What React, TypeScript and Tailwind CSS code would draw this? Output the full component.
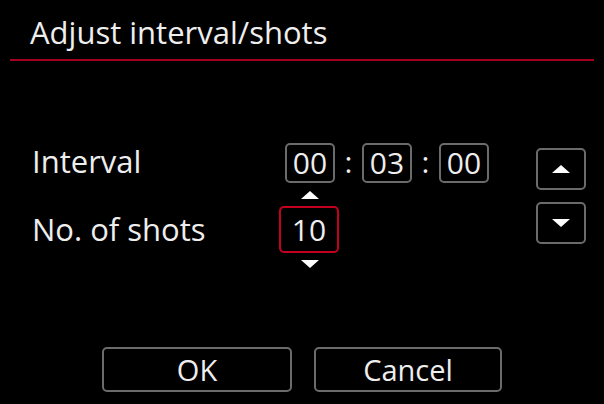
import React from "react";

function TimeBox({ value }: { value: string }) {
  return (
    <div className="w-[50px] h-[40px] border-2 border-[#6b6b6b] rounded-[5px] flex items-center justify-center text-[30px] leading-none text-[#eeeeee]">
      {value}
    </div>
  );
}

function Colon() {
  return <div className="w-[27px] text-center text-[30px] leading-none text-[#eeeeee] pb-[3px]">:</div>;
}

function UpTri() {
  return <div className="w-0 h-0 border-l-[9px] border-r-[9px] border-b-[8px] border-l-transparent border-r-transparent border-b-white" />;
}

function DownTri() {
  return <div className="w-0 h-0 border-l-[9px] border-r-[9px] border-t-[8px] border-l-transparent border-r-transparent border-t-white" />;
}

export default function App() {
  return (
    <div className="w-[604px] h-[404px] bg-black flex flex-col text-[#eeeeee] font-['Open_Sans',sans-serif] overflow-hidden">
      {/* Title */}
      <div className="h-[59px] flex items-center pl-[30px] pt-[6px]">
        <span className="text-[31px] leading-none">Adjust interval/shots</span>
      </div>
      <div className="mx-[10px] h-[2px] bg-[#a3001f]" />

      <div className="flex mt-[82px]">
        {/* Settings */}
        <div className="flex flex-col">
          <div className="flex items-center h-[40px]">
            <div className="w-[285px] pl-[32px] text-[31px] leading-none pb-[4px]">Interval</div>
            <TimeBox value="00" />
            <Colon />
            <TimeBox value="03" />
            <Colon />
            <TimeBox value="00" />
          </div>
          <div className="flex h-[23px] items-center">
            <div className="w-[285px]" />
            <div className="w-[50px] flex justify-center">
              <UpTri />
            </div>
          </div>
          <div className="flex items-center h-[47px]">
            <div className="w-[279px] pl-[32px] text-[31px] leading-none">No. of shots</div>
            <div className="w-[60px] h-[47px] border-2 border-[#c4001f] rounded-[5px] flex items-center justify-center text-[30px] leading-none">
              10
            </div>
          </div>
          <div className="flex h-[22px] items-center">
            <div className="w-[285px]" />
            <div className="w-[50px] flex justify-center">
              <DownTri />
            </div>
          </div>
        </div>

        {/* Up / down buttons */}
        <div className="ml-auto mr-[18px] mt-[5px] flex flex-col gap-[12px]">
          <div className="w-[50px] h-[42px] border-2 border-[#6b6b6b] rounded-[5px] flex items-center justify-center">
            <UpTri />
          </div>
          <div className="w-[50px] h-[42px] border-2 border-[#6b6b6b] rounded-[5px] flex items-center justify-center">
            <DownTri />
          </div>
        </div>
      </div>

      {/* Bottom buttons */}
      <div className="mt-auto mb-[12px] flex justify-center gap-[22px]">
        <div className="w-[190px] h-[45px] border-2 border-[#6b6b6b] rounded-[5px] flex items-center justify-center text-[29px] leading-none">
          OK
        </div>
        <div className="w-[188px] h-[45px] border-2 border-[#6b6b6b] rounded-[5px] flex items-center justify-center text-[29px] leading-none">
          Cancel
        </div>
      </div>
    </div>
  );
}
